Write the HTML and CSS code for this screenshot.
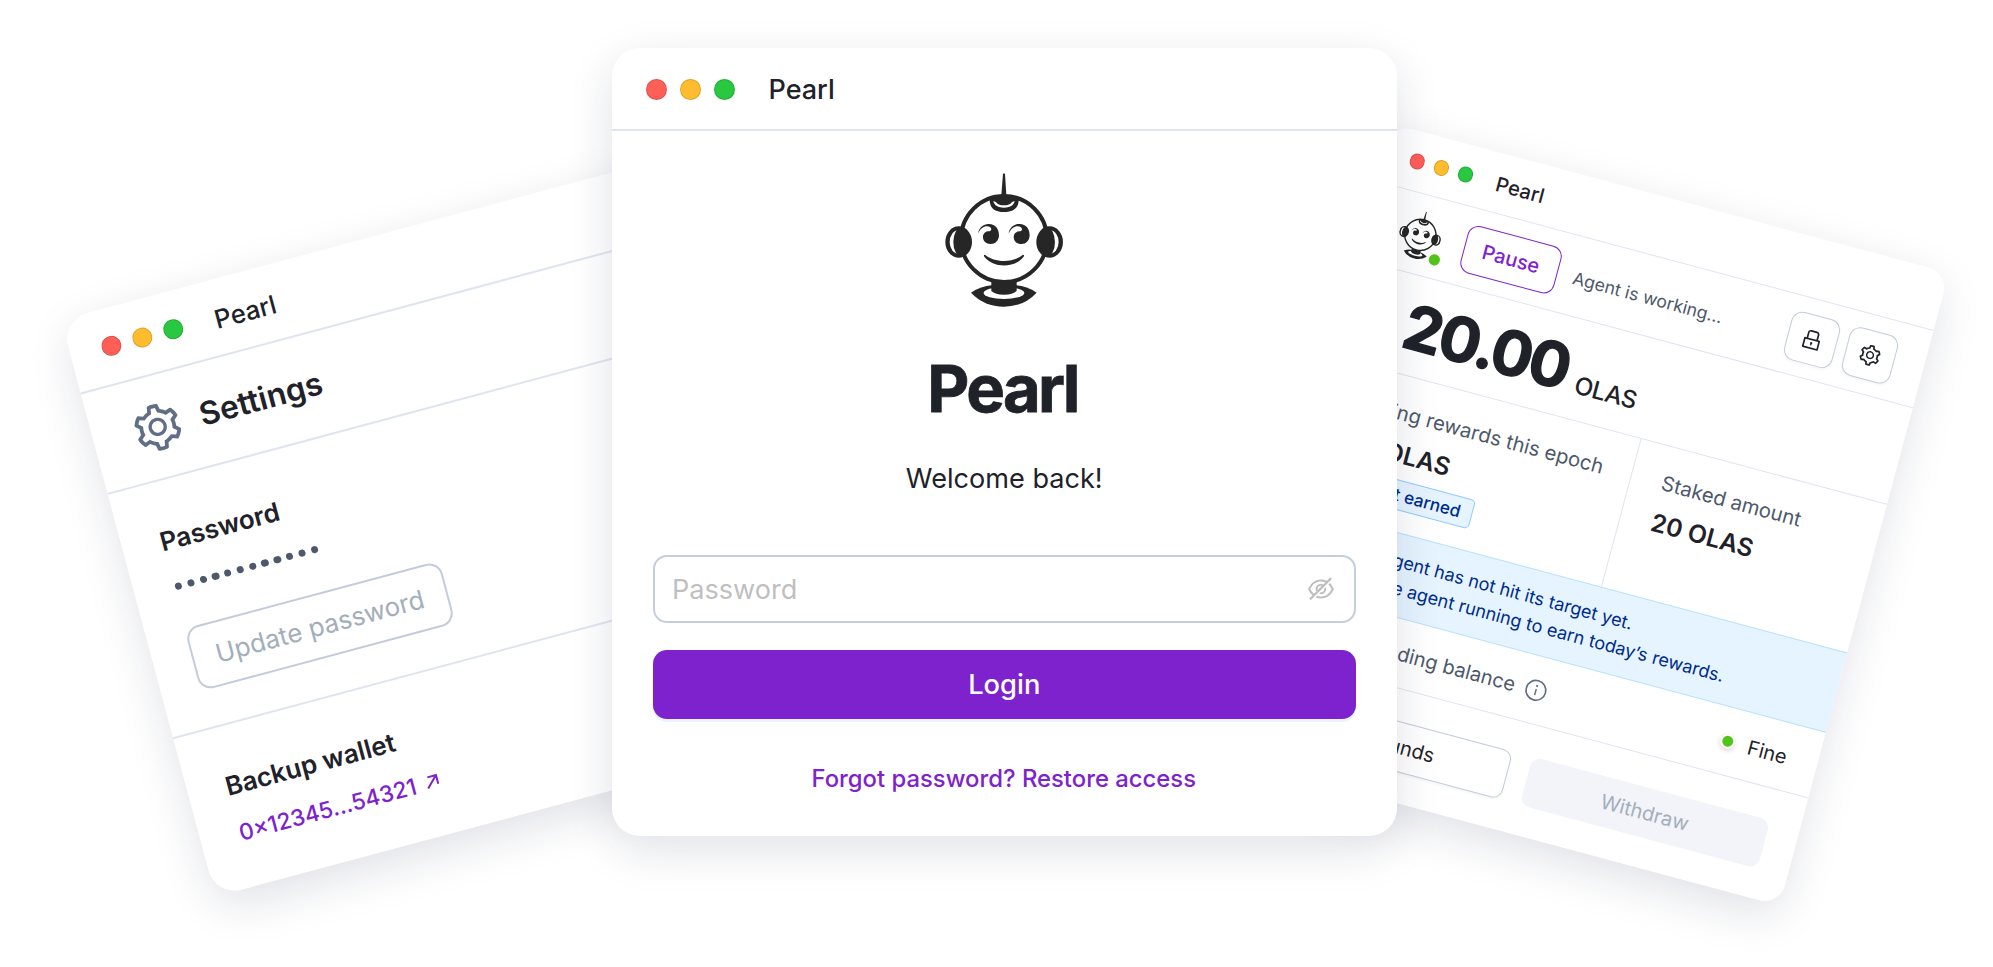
FILE: index.html
```html
<!DOCTYPE html>
<html lang="en">
<head>
<meta charset="utf-8">
<title>Pearl</title>
<link rel="stylesheet" href="styles.css">
</head>
<body>
<svg class="sprite" aria-hidden="true">
  <symbol id="robot" viewBox="76 39 355 402">
    <path d="M250 42Q253 38 256 42L260 106H245Z" fill="#262626"/>
    <circle cx="253" cy="237" r="129" fill="#fff" stroke="#262626" stroke-width="12"/>
    <path d="M210 119C210 145 226 156 253 156S297 145 297 119Q253 100 210 119Z" fill="#262626"/>
    <path d="M221 123C224 137 236 143 253 143S282 137 285 123L277 126C273 133 265 136 253 136S233 133 229 126Z" fill="#fff"/>
    <g id="ear">
      <ellipse cx="117" cy="246" rx="40" ry="47" fill="#262626"/>
      <ellipse cx="116" cy="246" rx="26" ry="35" fill="#fff"/>
      <ellipse cx="125" cy="246" rx="24" ry="44" fill="#262626"/>
    </g>
    <use href="#ear" transform="translate(507 0) scale(-1 1)"/>
    <g id="eye" fill="#262626">
      <path d="M175 222C177 201 194 191 208 192C228 193 238 207 238 225C238 242 227 252 213 252C199 252 190 243 190 231C190 220 199 214 207 214C216 214 217 207 212 202C203 195 184 198 175 222Z"/>
    </g>
    <use href="#eye" transform="translate(92 0)"/>
    <path d="M196 284C225 309 281 309 310 284Q315 285 312 290C285 325 221 325 194 290Q191 285 196 284Z" fill="#262626"/>
    <path d="M154 398Q185 378 216 376H290Q321 378 351 398Q312 440 253 440T154 398Z" fill="#262626"/>
    <ellipse cx="253" cy="399" rx="61" ry="18" fill="#fff"/>
    <path d="M215 366H291V393Q280 404 253 404T215 393Z" fill="#262626"/>
  </symbol>
  <symbol id="gear" viewBox="0 0 1024 1024">
    <path fill="currentColor" d="M924.8 625.7l-65.5-56c3.1-19 4.7-38.4 4.7-57.8s-1.6-38.8-4.7-57.8l65.5-56a32.03 32.03 0 009.3-35.2l-.9-2.6a443.74 443.74 0 00-79.7-137.9l-1.8-2.1a32.12 32.12 0 00-35.1-9.5l-81.3 28.9c-30-24.6-63.5-44-99.7-57.6l-15.7-85a32.05 32.05 0 00-25.8-25.7l-2.7-.5c-52.1-9.4-106.9-9.4-159 0l-2.7.5a32.05 32.05 0 00-25.8 25.7l-15.8 85.4a351.86 351.86 0 00-99 57.4l-81.9-29.1a32 32 0 00-35.1 9.5l-1.8 2.1a446.02 446.02 0 00-79.7 137.9l-.9 2.6c-4.5 12.5-.8 26.5 9.3 35.2l66.3 56.6c-3.1 18.8-4.6 38-4.6 57.1 0 19.2 1.5 38.4 4.6 57.1L99 625.5a32.03 32.03 0 00-9.3 35.2l.9 2.6c18.1 50.4 44.9 96.9 79.7 137.9l1.8 2.1a32.12 32.12 0 0035.1 9.5l81.9-29.1c29.8 24.5 63.1 43.9 99 57.4l15.8 85.4a32.05 32.05 0 0025.8 25.7l2.7.5a449.4 449.4 0 00159 0l2.7-.5a32.05 32.05 0 0025.8-25.7l15.7-85a350 350 0 0099.7-57.6l81.3 28.9a32 32 0 0035.1-9.5l1.8-2.1c34.8-41.1 61.6-87.5 79.7-137.9l.9-2.6c4.5-12.3.8-26.3-9.3-35zM788.3 465.9c2.5 15.1 3.8 30.6 3.8 46.1s-1.3 31-3.8 46.1l-6.6 40.1 74.7 63.9a370.03 370.03 0 01-42.6 73.6L721 702.8l-31.4 25.8c-23.9 19.6-50.5 35-79.3 45.8l-38.1 14.3-17.9 97a377.5 377.5 0 01-85 0l-17.9-97.2-37.8-14.5c-28.5-10.8-55-26.2-78.7-45.7l-31.4-25.9-93.4 33.2c-17-22.9-31.2-47.6-42.6-73.6l75.5-64.5-6.5-40c-2.4-14.9-3.7-30.3-3.7-45.5 0-15.3 1.2-30.6 3.7-45.5l6.5-40-75.5-64.5c11.3-26.1 25.6-50.7 42.6-73.6l93.4 33.2 31.4-25.9c23.7-19.5 50.2-34.9 78.7-45.7l37.9-14.3 17.9-97.2c28.1-3.2 56.8-3.2 85 0l17.9 97 38.1 14.3c28.7 10.8 55.4 26.2 79.3 45.8l31.4 25.8 92.8-32.9c17 22.9 31.2 47.6 42.6 73.6L781.8 426l6.5 39.9zM512 326c-97.2 0-176 78.8-176 176s78.8 176 176 176 176-78.8 176-176-78.8-176-176-176zm79.2 255.2A111.6 111.6 0 01512 614c-29.9 0-58-11.7-79.2-32.8A111.6 111.6 0 01400 502c0-29.9 11.7-58 32.8-79.2C454 401.6 482.1 390 512 390c29.9 0 58 11.6 79.2 32.8A111.6 111.6 0 01624 502c0 29.9-11.7 58-32.8 79.2z"/>
  </symbol>
</svg>

<main class="stage">
  <section class="window settings">
    <header class="titlebar"><i class="dot red"></i><i class="dot yellow"></i><i class="dot green"></i><span class="app">Pearl</span></header>
    <div class="settings-head"><svg class="settings-gear"><use href="#gear"/></svg><h2 class="settings-title">Settings</h2></div>
    <div class="settings-block">
      <h3 class="label">Password</h3>
      <div class="mask"><i></i><i></i><i></i><i></i><i></i><i></i><i></i><i></i><i></i><i></i><i></i><i></i></div>
      <button class="update">Update password</button>
    </div>
    <div class="settings-block wallet">
      <h3 class="label">Backup wallet</h3>
      <a class="address">0×12345...54321<svg class="arrow" viewBox="0 0 14 14"><path d="M1.5 12.5L12 2M3.5 1.6H12.4V10.5" fill="none" stroke="currentColor" stroke-width="2"/></svg></a>
    </div>
  </section>

  <section class="window agent">
    <header class="titlebar"><i class="dot red"></i><i class="dot yellow"></i><i class="dot green"></i><span class="app">Pearl</span></header>
    <div class="status">
      <div class="avatar"><svg class="avatar-robot"><use href="#robot"/></svg><i class="online"></i></div>
      <button class="pause">Pause</button>
      <span class="working">Agent is working...</span>
      <button class="square"><svg viewBox="0 0 1024 1024"><path fill="currentColor" d="M832 464h-68V240c0-70.7-57.3-128-128-128H388c-70.7 0-128 57.3-128 128v224h-68c-17.7 0-32 14.3-32 32v384c0 17.7 14.3 32 32 32h640c17.7 0 32-14.3 32-32V496c0-17.7-14.3-32-32-32zM332 240c0-30.9 25.1-56 56-56h248c30.9 0 56 25.1 56 56v224H332V240zm460 600H232V536h560v304zM484 701v53c0 4.4 3.6 8 8 8h40c4.4 0 8-3.6 8-8v-53a48.01 48.01 0 10-56 0z"/></svg></button>
      <button class="square"><svg><use href="#gear"/></svg></button>
    </div>
    <div class="balance"><span class="amount">20.00</span><span class="unit">OLAS</span></div>
    <div class="stats">
      <div class="stat rewards">
        <span class="stat-name">Staking rewards this epoch</span>
        <span class="stat-value">0.5 OLAS</span>
        <span class="tag">Not yet earned</span>
      </div>
      <div class="stat staked">
        <span class="stat-name">Staked amount</span>
        <span class="stat-value">20 OLAS</span>
      </div>
    </div>
    <div class="notice">
      <p class="notice-lead">Your agent has not hit its target yet.</p>
      <p>Keep the agent running to earn today’s rewards.</p>
    </div>
    <div class="funding">
      <span class="funding-name">Trading balance</span>
      <svg class="info" viewBox="0 0 22 22"><circle cx="11" cy="11" r="9.9" fill="none" stroke="currentColor" stroke-width="1.7"/><path d="M11 9.6V16" stroke="currentColor" stroke-width="1.5"/><circle cx="11" cy="6.6" r="1.1" fill="currentColor"/></svg>
      <i class="fine-dot"></i><span class="fine">Fine</span>
    </div>
    <div class="actions"><button class="action add">Add funds</button><button class="action withdraw">Withdraw</button></div>
  </section>

  <section class="window login">
    <header class="titlebar"><i class="dot red"></i><i class="dot yellow"></i><i class="dot green"></i><span class="app">Pearl</span></header>
    <div class="login-body">
      <svg class="login-robot"><use href="#robot"/></svg>
      <h1 class="brand">Pearl</h1>
      <p class="welcome">Welcome back!</p>
      <div class="field"><span class="placeholder">Password</span>
        <svg class="eye" viewBox="0 0 1024 1024"><path fill="currentColor" d="M942.2 486.2Q889.47 375.11 816.7 305l-50.88 50.88C807.31 395.53 843.45 447.4 874.7 512 791.5 684.2 673.4 766 512 766q-72.67 0-133.87-22.38L323 798.75Q408 838 512 838q288.3 0 430.2-300.3a60.29 60.29 0 000-51.5zm-63.57-320.64L836 122.88a8 8 0 00-11.32 0L715.31 232.2Q624.86 186 512 186q-288.3 0-430.2 300.3a60.3 60.3 0 000 51.5q56.69 119.4 136.5 191.41L112.48 835a8 8 0 000 11.31L155.17 889a8 8 0 0011.31 0l712.15-712.12a8 8 0 000-11.32zM149.3 512C232.6 339.8 350.7 258 512 258c54.54 0 104.13 9.36 149.12 28.39l-70.3 70.3a176 176 0 00-238.13 238.13l-83.42 83.42C223.1 637.49 183.3 582.28 149.3 512zm246.7 0a112.11 112.11 0 01146.2-106.69L401.31 546.2A112 112 0 01396 512z"/><path fill="currentColor" d="M508 624c-3.46 0-6.87-.16-10.25-.47l-52.82 52.82a176.09 176.09 0 00227.42-227.42l-52.82 52.82c.31 3.38.47 6.79.47 10.25a111.94 111.94 0 01-112 112z"/></svg>
      </div>
      <button class="submit">Login</button>
      <a class="restore">Forgot password? Restore access</a>
    </div>
  </section>
</main>
</body>
</html>
```

FILE: styles.css
```css
* { box-sizing: border-box; }
body { margin: 0; background: #fff; font-family: Inter, sans-serif; color: #1f2229; }
h1, h2, h3, p { margin: 0; }
button { font: inherit; color: inherit; padding: 0; margin: 0; background: #fff; white-space: nowrap; }
svg { display: block; flex: none; }
.sprite { position: absolute; width: 0; height: 0; }
.stage { position: relative; width: 1993px; height: 967px; overflow: hidden; }

/* Overlapping windows on the canvas */
.window { position: absolute; background: #fff; overflow: visible; white-space: nowrap; box-shadow: 0 14px 46px rgba(24, 34, 72, .13); }
.titlebar { display: flex; align-items: center; border-bottom: 2px solid #dfe5f0; }
.dot { flex: none; border-radius: 50%; border: 1px solid rgba(0, 0, 0, .14); }
.red { background: #ff5f57; }
.yellow { background: #febc2e; }
.green { background: #28c840; }
.app { font-weight: 450; }

/* Login */
.login { left: 612px; top: 48px; width: 784.5px; height: 788px; border-radius: 28px; }
.login .titlebar { height: 83px; padding: 1px 0 0 34px; gap: 13px; }
.login .dot { width: 21px; height: 21px; }
.login .app { margin-left: 20.5px; padding-top: 1px; font-size: 27px; }
.login-body { display: flex; flex-direction: column; align-items: center; padding: 42px 41px 0; }
.login-robot { width: 118.3px; height: 134px; }
.brand { margin: 42px 3.5px 0 0; font-size: 65px; line-height: 80px; font-weight: 700; letter-spacing: -2.7px; -webkit-text-stroke: .8px #1f2229; }
.welcome { margin-top: 29.5px; font-size: 27.1px; line-height: 40px; }
.field { display: flex; justify-content: space-between; align-items: center; align-self: stretch; height: 68px; margin-top: 56px; padding: 0 18px 0 17px; border: 2px solid #c5cedd; border-radius: 14px; color: #bfbfbf; }
.placeholder { padding-top: 1px; font-size: 27.1px; }
.eye { width: 30px; height: 30px; }
.submit { align-self: stretch; height: 69px; margin-top: 27px; border: 0; border-radius: 14px; background: #7e22ce; color: #fff; font-size: 27.3px; font-weight: 450; box-shadow: 0 3px 0 #e9f4ff; }
.restore { margin: 42px 1px 0 0; font-size: 23.85px; line-height: 36px; font-weight: 500; color: #7e22ce; }

/* Settings */
.settings { left: 60.6px; top: 319.5px; width: 600px; height: 597.2px; border-radius: 27px; transform: rotate(-15deg); transform-origin: 0 0; }
.settings .titlebar { height: 77px; padding-left: 31.5px; gap: 12.2px; }
.settings .dot { width: 20px; height: 20px; }
.settings .app { margin-left: 20.5px; padding-top: 3.5px; font-size: 25.7px; }
.settings-head { display: flex; align-items: center; height: 103.6px; padding-left: 38.5px; gap: 17.5px; border-bottom: 2px solid #dfe5f0; }
.settings-gear { width: 53.5px; height: 53.5px; margin-top: 2px; color: #606f85; }
.settings-title { margin-top: -1px; font-size: 31.8px; font-weight: 600; }
.settings-block { display: flex; flex-direction: column; align-items: flex-start; height: 253px; padding: 43.5px 0 0 38.3px; border-bottom: 2px solid #dfe5f0; }
.label { font-size: 25.9px; line-height: 34px; font-weight: 600; }
.mask { display: flex; gap: 5.47px; padding: 26px 0 0 2.8px; }
.mask i { width: 7.3px; height: 7.3px; border-radius: 50%; background: #4d596a; }
.update { width: 264px; height: 65px; margin: 39px 0 0 .5px; border: 2px solid #c3ccdb; border-radius: 14px; color: #a3aebb; font-size: 25.8px; }
.settings-block.wallet { border: 0; height: auto; }
.address { display: flex; align-items: center; gap: 10px; margin: 13.5px 0 0 1.3px; font-size: 22.7px; line-height: 34px; font-weight: 450; color: #7e22ce; }
.arrow { width: 14px; height: 14px; }

/* Agent */
.agent { left: 1371.7px; top: 273.2px; width: 577px; height: 654.6px; border-radius: 21px; transform: rotate(15deg); transform-origin: 100% 0; }
.agent .titlebar { height: 60.3px; padding: 1px 0 0 26.5px; gap: 9.6px; border-bottom-width: 1.5px; }
.agent .dot { width: 15.5px; height: 15.5px; }
.agent .app { margin-left: 14.7px; font-size: 20.2px; }
.status { display: flex; align-items: center; height: 79.9px; padding: 1.5px 30.5px 0 34.5px; border-bottom: 1.5px solid #dfe5f0; }
.avatar { position: relative; width: 43px; height: 48.6px; }
.avatar-robot { width: 43px; height: 48.6px; }
.online { position: absolute; right: -4px; bottom: -1px; width: 10.5px; height: 10.5px; border-radius: 50%; background: #52c41a; }
.pause { width: 97.5px; height: 49px; margin-left: 24px; border: 1.5px solid #7e22ce; border-radius: 11px; color: #7e22ce; font-size: 20px; font-weight: 500; }
.working { margin: 2px auto 0 16px; font-size: 17.6px; color: #4d596a; }
.square { display: flex; align-items: center; justify-content: center; width: 50px; height: 50px; margin-left: 10px; border: 1.5px solid #c3ccdb; border-radius: 11px; box-shadow: 0 2px 2px rgba(0, 0, 0, .03); color: #1f2229; }
.square svg { width: 24px; height: 24px; }
.balance { display: flex; align-items: baseline; height: 100.3px; padding-left: 65px; border-bottom: 1.5px solid #dfe5f0; line-height: 102px; }
.amount { font-size: 62px; font-weight: 700; letter-spacing: -2.6px; -webkit-text-stroke: 1.3px #1f2229; }
.unit { margin-left: 11px; font-size: 24.4px; font-weight: 550; letter-spacing: -.5px; }
.stats { display: grid; grid-template-columns: 323px 1fr; height: 152.5px; }
.stat { display: flex; flex-direction: column; align-items: flex-start; padding: 22px 0 0 33px; }
.staked { padding-left: 31px; }
.rewards { border-right: 1.5px solid #dfe5f0; }
.stat-name { font-size: 20.3px; line-height: 30px; color: #4d596a; }
.stat-value { margin-top: 6.5px; font-size: 24.8px; line-height: 36px; font-weight: 600; }
.tag { margin-top: 7px; padding: 0 11px; font-size: 17.2px; line-height: 28px; font-weight: 500; color: #002c8c; background: #e6f4ff; border: 1.5px solid #91caff; border-radius: 5px; }
.notice { height: 83px; padding: 13px 0 0 56px; background: #e6f4ff; border: solid #bae0ff; border-width: 1.5px 0; font-size: 18px; line-height: 27.5px; color: #002c8c; }
.notice-lead { padding-left: 4px; }
.funding { display: flex; align-items: center; height: 68.4px; padding: 0 30px 0 33px; border-bottom: 1.5px solid #dfe5f0; font-size: 20px; }
.funding-name { width: 231.5px; text-align: right; color: #4d596a; }
.info { width: 22px; height: 22px; margin-left: 10.5px; color: #606f85; }
.fine-dot { width: 15px; height: 15px; margin-left: auto; border: 2.5px solid #fff; border-radius: 50%; background: #52c41a; box-shadow: 0 2px 5px rgba(0, 0, 0, .15); }
.fine { margin: 1px 1.5px 0 13px; }
.actions { display: flex; gap: 19.5px; padding: 30.5px 31px 0 31.5px; }
.action { flex: 1; height: 50px; border-radius: 10px; font-size: 20px; }
.add { border: 1.5px solid #c3ccdb; box-shadow: 0 2px 2px rgba(0, 0, 0, .03); }
.withdraw { border: 0; background: #f2f4f9; color: #a3aebb; }
```
